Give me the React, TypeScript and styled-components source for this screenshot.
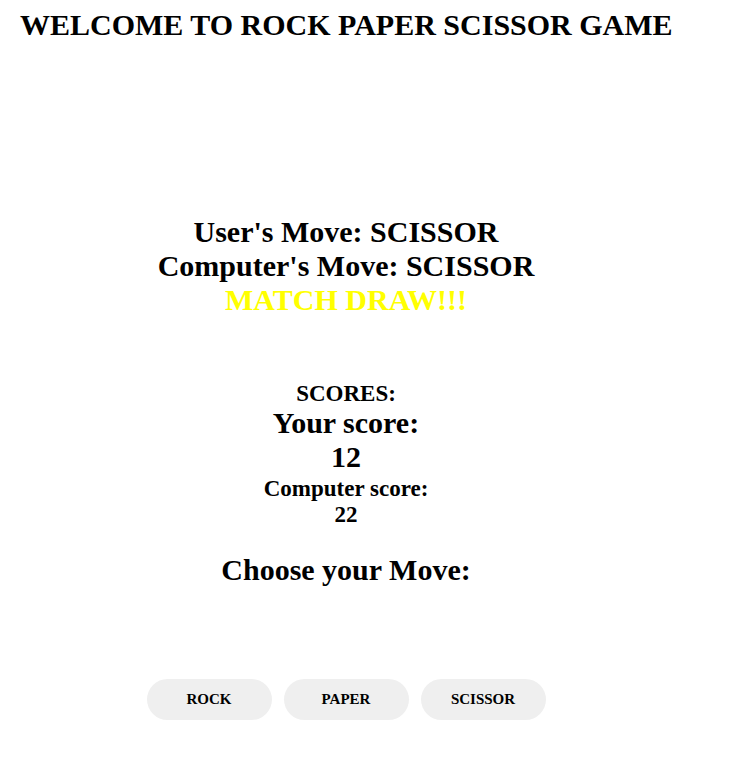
import React from "react";
import styled, { createGlobalStyle } from "styled-components";

const Global = createGlobalStyle`
  html, body { margin: 0; padding: 0; background: #fff; }
  body { font-family: "Liberation Serif", "Times New Roman", serif; color: #000; }
`;

const Page = styled.div`
  padding: 9px 0 0 20px;
`;

const Title = styled.h1`
  margin: 0;
  font-size: 30px;
  line-height: 32px;
  font-weight: bold;
`;

const Main = styled.main`
  width: 652px;
  text-align: center;
  display: flex;
  flex-direction: column;
  align-items: center;
`;

const Result = styled.section`
  margin-top: 174px;
  display: flex;
  flex-direction: column;
  align-items: center;
`;

const Line = styled.div<{ $size: number; $lh: number; $color?: string }>`
  font-size: ${(p) => p.$size}px;
  line-height: ${(p) => p.$lh}px;
  font-weight: bold;
  color: ${(p) => p.$color || "#000"};
`;

const Scores = styled.section`
  margin-top: 64px;
  display: flex;
  flex-direction: column;
  align-items: center;
`;

const Prompt = styled.h2`
  margin: 27px 0 0;
  font-size: 30px;
  line-height: 34px;
  font-weight: bold;
`;

const Buttons = styled.div`
  margin-top: 92px;
  display: flex;
  gap: 12px;
`;

const MoveButton = styled.button`
  width: 125px;
  height: 41px;
  padding: 0;
  border: none;
  border-radius: 21px;
  background: #efefef;
  font-family: "Liberation Serif", "Times New Roman", serif;
  font-weight: bold;
  font-size: 15px;
  color: #000;
  cursor: pointer;
`;

export default function App() {
  return (
    <Page>
      <Global />
      <Title>WELCOME TO ROCK PAPER SCISSOR GAME</Title>
      <Main>
        <Result>
          <Line $size={30} $lh={34}>User's Move: SCISSOR</Line>
          <Line $size={30} $lh={34}>Computer's Move: SCISSOR</Line>
          <Line $size={30} $lh={34} $color="#ffff00">MATCH DRAW!!!</Line>
        </Result>
        <Scores>
          <Line $size={23} $lh={25}>SCORES:</Line>
          <Line $size={30} $lh={34}>Your score:</Line>
          <Line $size={30} $lh={34}>12</Line>
          <Line $size={23} $lh={29}>Computer score:</Line>
          <Line $size={23} $lh={23}>22</Line>
        </Scores>
        <Prompt>Choose your Move:</Prompt>
        <Buttons>
          <MoveButton>ROCK</MoveButton>
          <MoveButton>PAPER</MoveButton>
          <MoveButton>SCISSOR</MoveButton>
        </Buttons>
      </Main>
    </Page>
  );
}
